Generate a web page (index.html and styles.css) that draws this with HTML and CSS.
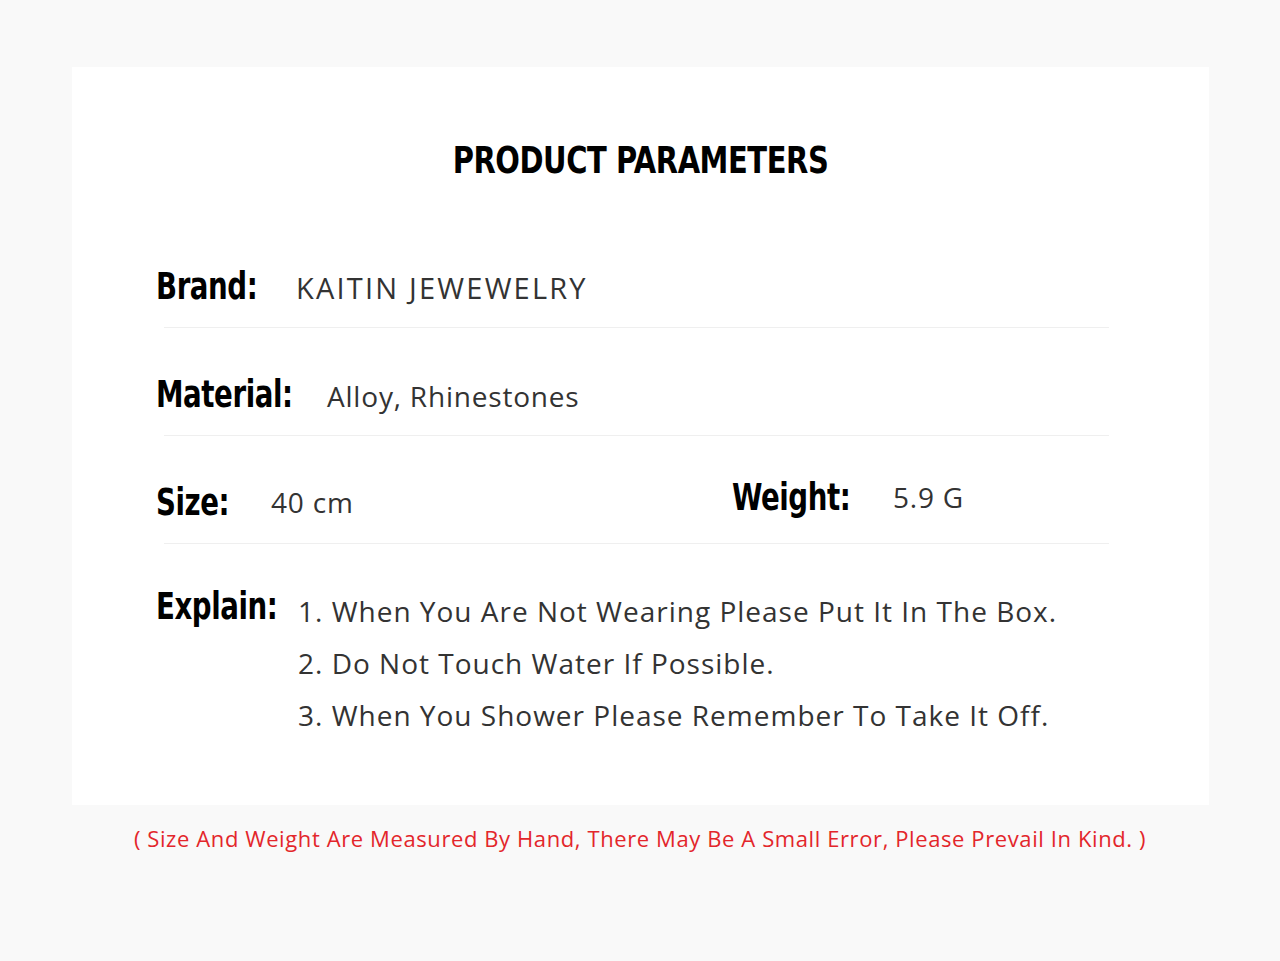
FILE: index.html
```html
<!DOCTYPE html>
<html>
<head>
<meta charset="utf-8">
<link rel="stylesheet" href="styles.css">
</head>
<body>
<div class="card">
  <h1 class="title">PRODUCT PARAMETERS</h1>
  <div class="params">
    <div class="row row-brand">
      <span class="label label-brand">Brand:</span>
      <span class="value v-brand">KAITIN JEWEWELRY</span>
    </div>
    <div class="rule"></div>
    <div class="row row-material">
      <span class="label label-material">Material:</span>
      <span class="value v-material">Alloy, Rhinestones</span>
    </div>
    <div class="rule"></div>
    <div class="row row-size">
      <div class="half">
        <span class="label label-size">Size:</span>
        <span class="value v-size">40 cm</span>
      </div>
      <div class="half half-right">
        <span class="label label-weight">Weight:</span>
        <span class="value v-weight">5.9 G</span>
      </div>
    </div>
    <div class="rule"></div>
    <div class="row row-explain">
      <span class="label label-explain">Explain:</span>
      <ol class="list">
        <li>1. When You Are Not Wearing Please Put It In The Box.</li>
        <li>2. Do Not Touch Water If Possible.</li>
        <li>3. When You Shower Please Remember To Take It Off.</li>
      </ol>
    </div>
  </div>
</div>
<p class="note">( Size And Weight Are Measured By Hand, There May Be A Small Error, Please Prevail In Kind. )</p>
</body>
</html>
```

FILE: styles.css
```css
html, body {
  margin: 0;
  padding: 0;
}
body {
  background: #f9f9f9;
  font-family: "Open Sans", "Lato", sans-serif;
  color: #333;
  width: 1280px;
  height: 961px;
  overflow: hidden;
}
.card {
  margin: 67px 0 0 72px;
  width: 1137px;
  height: 738px;
  background: #fff;
  box-sizing: border-box;
  padding-top: 66px;
}
.title {
  margin: 0;
  text-align: center;
  font-family: "DejaVu Sans Condensed", "DejaVu Sans", sans-serif;
  font-weight: 700;
  font-size: 37px;
  line-height: 56px;
  color: #000;
  letter-spacing: -0.5px;
  transform: scaleX(0.87);
}
.params {
  padding: 0 100px 0 84px;
  margin-top: 68px;
}
.row {
  display: flex;
  align-items: baseline;
}
.label {
  display: inline-block;
  white-space: nowrap;
  font-family: "DejaVu Sans Condensed", "DejaVu Sans", sans-serif;
  font-weight: 700;
  font-size: 37px;
  line-height: 60px;
  color: #000;
  letter-spacing: -0.5px;
  transform: scaleX(0.83);
  transform-origin: left center;
}
.label-brand { width: 100px; }
.label-material { width: 136px; }
.label-size { width: 71px; }
.label-weight { width: 117px; }
.label-explain { width: 120px; }
.value {
  font-size: 28px;
  color: #333;
}
.v-brand {
  margin-left: 40px;
  font-size: 29px;
  letter-spacing: 2.2px;
}
.v-material {
  margin-left: 35px;
  letter-spacing: 0.8px;
}
.v-size {
  margin-left: 44px;
  letter-spacing: 0.8px;
  position: relative;
  top: -2px;
}
.v-weight {
  margin-left: 44px;
  letter-spacing: 0.8px;
  position: relative;
  top: -2px;
}
.rule {
  height: 1px;
  background: #efefef;
  margin: 10px 0 37px 8px;
  width: 945px;
}
.half {
  display: flex;
  align-items: baseline;
  width: 576px;
}
.half-right {
  width: auto;
  transform: translateY(-5px);
}
.list {
  list-style: none;
  margin: 0 0 0 22px;
  padding: 4px 0 0;
  font-size: 28px;
  letter-spacing: 1px;
  color: #333;
}
.list li {
  line-height: 52px;
}
.row-explain {
  align-items: flex-start;
}
.row-explain .label {
  line-height: 52px;
}
.note {
  margin: 18px 0 0;
  text-align: center;
  color: #e3262b;
  font-size: 22px;
  letter-spacing: 0.6px;
}
```
